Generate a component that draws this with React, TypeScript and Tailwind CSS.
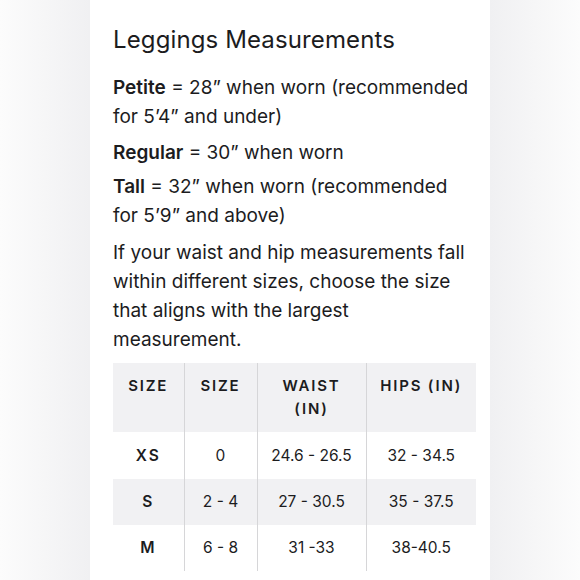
const rows = [
  { label: 'XS', size: '0', waist: '24.6 - 26.5', hips: '32 - 34.5' },
  { label: 'S', size: '2 - 4', waist: '27 - 30.5', hips: '35 - 37.5' },
  { label: 'M', size: '6 - 8', waist: '31 -33', hips: '38-40.5' },
];

export default function App() {
  return (
    <div className="flex h-[580px] w-[580px] font-['Inter',sans-serif] text-[#1c1c1e]">
      <div className="w-[90px] flex-shrink-0 bg-linear-to-r from-[#fcfcfc] to-[#f0f0f2]" />

      <div className="w-[400px] flex-shrink-0 bg-white pl-[23px] pr-[10px] pt-[24px]">
        <h1 className="text-[24px] leading-[32px] font-normal tracking-[0.005em]">Leggings Measurements</h1>

        <div className="mt-[17px] max-w-[358px] text-[19px] leading-[29px]">
          <p>
            <b className="font-semibold">Petite</b> = 28” when worn (recommended for 5’4” and under)
          </p>
          <p className="mt-[7px]">
            <b className="font-semibold">Regular</b> = 30” when worn
          </p>
          <p className="mt-[5px]">
            <b className="font-semibold">Tall</b> = 32” when worn (recommended for 5’9” and above)
          </p>
          <p className="mt-[8px]">
            If your waist and hip measurements fall within different sizes, choose the size that
            aligns with the largest measurement.
          </p>
        </div>

        {/* Size chart */}
        <table className="mt-[9px] w-[363px] table-fixed border-collapse text-center text-[15.5px]">
          <colgroup>
            <col className="w-[71px]" />
            <col className="w-[73px]" />
            <col className="w-[109px]" />
            <col className="w-[110px]" />
          </colgroup>
          <thead>
            <tr className="h-[69px] bg-[#f1f1f3] align-top text-[15px] font-semibold tracking-[0.12em] leading-[23px]">
              <th className="pt-[11px] font-semibold">SIZE</th>
              <th className="border-l border-[#d6d6d8] pt-[11px] font-semibold">SIZE</th>
              <th className="border-l border-[#d6d6d8] pt-[11px] font-semibold">
                WAIST
                <br />
                (IN)
              </th>
              <th className="border-l border-[#d6d6d8] pt-[11px] font-semibold">HIPS (IN)</th>
            </tr>
          </thead>
          <tbody>
            {rows.map((r, i) => (
              <tr key={r.label} className={i === 1 ? 'h-[46px] bg-[#f1f1f3]' : i === 0 ? 'h-[47px]' : 'h-[46px]'}>
                <td className="font-semibold tracking-[0.12em]">{r.label}</td>
                <td className="border-l border-[#d6d6d8]">{r.size}</td>
                <td className="border-l border-[#d6d6d8]">{r.waist}</td>
                <td className="border-l border-[#d6d6d8]">{r.hips}</td>
              </tr>
            ))}
          </tbody>
        </table>
      </div>

      <div className="w-[90px] flex-shrink-0 bg-linear-to-l from-[#fcfcfc] to-[#f0f0f2]" />
    </div>
  );
}
